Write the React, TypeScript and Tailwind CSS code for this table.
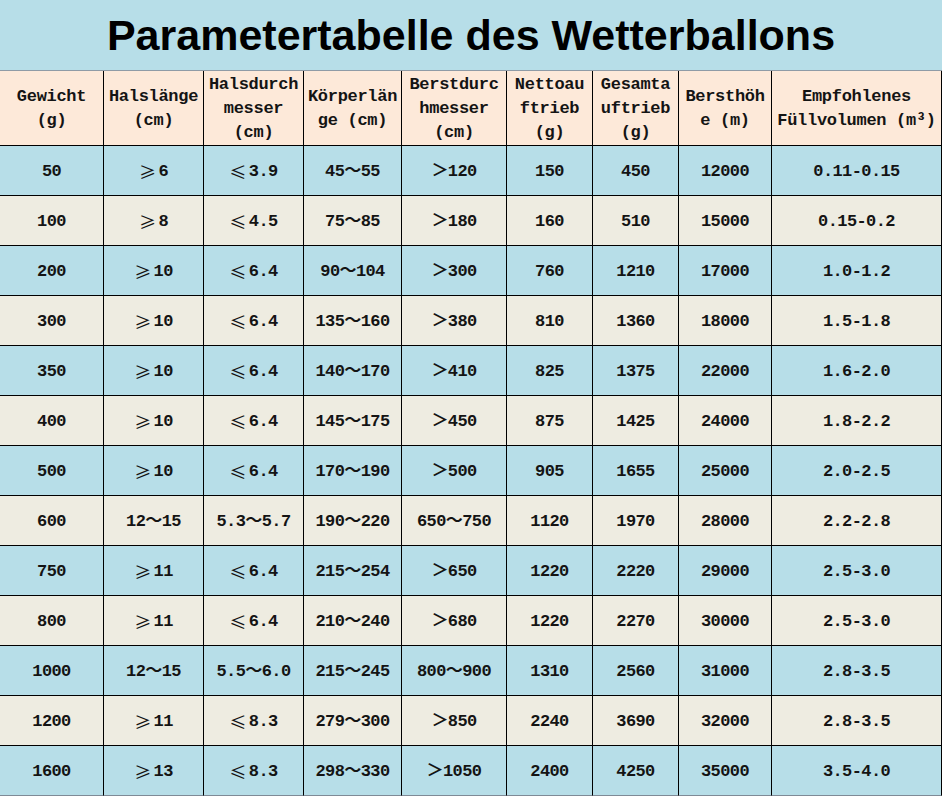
const columns = [
  ["Gewicht", "(g)"],
  ["Halslänge", "(cm)"],
  ["Halsdurch", "messer", "(cm)"],
  ["Körperlän", "ge (cm)"],
  ["Berstdurc", "hmesser", "(cm)"],
  ["Nettoau", "ftrieb", "(g)"],
  ["Gesamta", "uftrieb", "(g)"],
  ["Bersthöh", "e (m)"],
  ["Empfohlenes", "Füllvolumen (m³)"],
];

const rows = [
  ["50", "≥6", "≤3.9", "45～55", "＞120", "150", "450", "12000", "0.11-0.15"],
  ["100", "≥8", "≤4.5", "75～85", "＞180", "160", "510", "15000", "0.15-0.2"],
  ["200", "≥10", "≤6.4", "90～104", "＞300", "760", "1210", "17000", "1.0-1.2"],
  ["300", "≥10", "≤6.4", "135～160", "＞380", "810", "1360", "18000", "1.5-1.8"],
  ["350", "≥10", "≤6.4", "140～170", "＞410", "825", "1375", "22000", "1.6-2.0"],
  ["400", "≥10", "≤6.4", "145～175", "＞450", "875", "1425", "24000", "1.8-2.2"],
  ["500", "≥10", "≤6.4", "170～190", "＞500", "905", "1655", "25000", "2.0-2.5"],
  ["600", "12～15", "5.3～5.7", "190～220", "650～750", "1120", "1970", "28000", "2.2-2.8"],
  ["750", "≥11", "≤6.4", "215～254", "＞650", "1220", "2220", "29000", "2.5-3.0"],
  ["800", "≥11", "≤6.4", "210～240", "＞680", "1220", "2270", "30000", "2.5-3.0"],
  ["1000", "12～15", "5.5～6.0", "215～245", "800～900", "1310", "2560", "31000", "2.8-3.5"],
  ["1200", "≥11", "≤8.3", "279～300", "＞850", "2240", "3690", "32000", "2.8-3.5"],
  ["1600", "≥13", "≤8.3", "298～330", "＞1050", "2400", "4250", "35000", "3.5-4.0"],
];

// ≥ / ≤ come out wider in the CJK font, like the original sheet
function Cell({ value }: { value: string }) {
  const sign = value[0] === "≥" || value[0] === "≤";
  if (!sign) return <>{value}</>;
  return (
    <>
      <span className="mr-[3px] font-normal [font-family:'Noto_Sans_CJK_SC',sans-serif]">{value[0]}</span>
      {value.slice(1)}
    </>
  );
}

export default function App() {
  return (
    <div className="h-[796px] w-[942px] overflow-hidden bg-white">
      <div className="flex h-[70px] items-center justify-center bg-[#b7dee8]">
        <h1 className="text-[43px] font-bold text-black [font-family:'Liberation_Sans',Arial,sans-serif]">
          Parametertabelle des Wetterballons
        </h1>
      </div>

      <div className="grid grid-cols-[104px_100px_100px_98px_105px_86px_86px_93px_170px] border-t border-[#8f9ba6] font-bold text-[#141414] [font-family:'Liberation_Mono','Noto_Sans_CJK_SC',monospace]">
        {columns.map((lines, index) => (
          <div
            key={index}
            className="flex h-[75px] flex-col items-center justify-center border-r border-b border-black bg-[#fde9d9] pt-[2px] text-[17px] leading-[24px] tracking-[-0.3px]"
          >
            {lines.map((line) => (
              <span key={line} className="whitespace-pre">
                {line}
              </span>
            ))}
          </div>
        ))}

        {rows.map((row, rowIndex) => {
          const last = rowIndex === rows.length - 1;
          const bg = rowIndex % 2 === 0 ? "bg-[#b7dee8]" : "bg-[#eeece1]";
          return row.map((cell, cellIndex) => (
            <div
              key={`${rowIndex}-${cellIndex}`}
              className={`flex h-[50px] items-center justify-center border-r border-b pt-[2px] text-[17px] tracking-[-0.6px] ${last ? "border-b-[#7f8a96]" : "border-b-black"} border-r-black ${bg}`}
            >
              <Cell value={cell} />
            </div>
          ));
        })}
      </div>
    </div>
  );
}
